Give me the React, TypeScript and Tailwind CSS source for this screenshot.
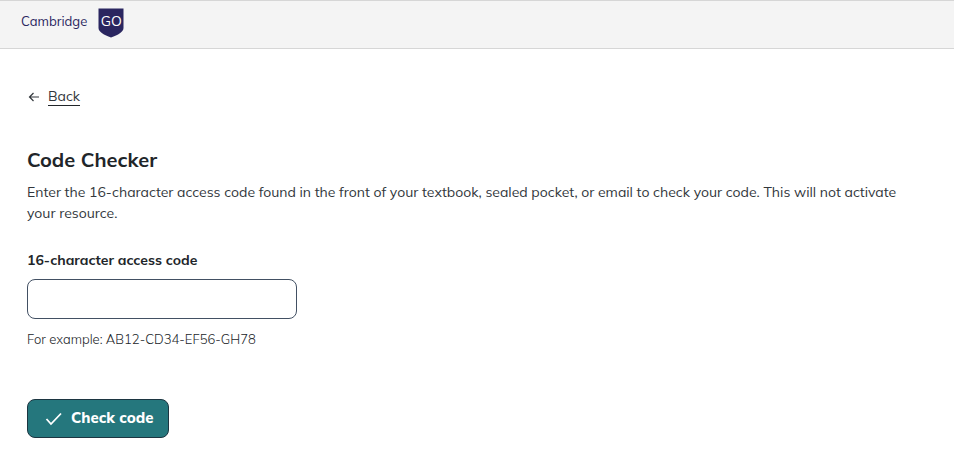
function Header() {
  return (
    <header className="flex h-[49px] border-y border-[#d6d6d6] bg-[#f4f4f4] px-[21px] pt-[7px]">
      <a href="#" className="flex items-start gap-[11px] text-[#2a2660]">
        <span className="pt-1 text-[13px] leading-[18px]">Cambridge</span>
        <span className="relative flex h-[30px] w-[26px] justify-center pt-1 text-[14px] leading-[18px] text-white">
          <svg viewBox="0 0 26 30" className="absolute inset-0 h-full w-full" aria-hidden="true">
            <path d="M0.5 0.500h25v19.5c0 4-5.500 7-12.500 9.500C6 27 0.500 24 0.500 20z" fill="#2a2660" />
          </svg>
          <span className="relative">GO</span>
        </span>
      </a>
    </header>
  );
}

function BackLink() {
  return (
    <a href="#" className="flex w-fit items-center text-[14px] leading-[17px] text-[#32373c]">
      <svg viewBox="0 0 12 12" className="mr-2 ml-px h-3 w-3" fill="none" stroke="currentColor" strokeWidth="1.2" aria-hidden="true">
        <path d="M11 6H2M5.500 2L1.500 6l4 4" />
      </svg>
      <span className="border-b border-[#212529]">Back</span>
    </a>
  );
}

function CodeForm() {
  return (
    <form className="mt-[26px] flex flex-col items-start" onSubmit={(e) => e.preventDefault()}>
      <label htmlFor="access-code" className="text-[14px] leading-[20px] font-bold text-[#212529]">
        16-character access code
      </label>
      <input
        id="access-code"
        type="text"
        aria-describedby="access-code-hint"
        className="mt-[9px] h-10 w-full max-w-[270px] rounded-[8px] border border-[#425063] bg-white px-3 text-[14px]"
      />
      <p id="access-code-hint" className="mt-[10px] text-[13px] leading-[20px] font-light text-[#212529]">
        For example: AB12-CD34-EF56-GH78
      </p>
      <button
        type="submit"
        className="mt-[50px] flex h-[39px] items-center gap-2 rounded-[8px] border border-[#1c3541] bg-[#25777d] pr-[15px] pl-[17px] text-[15px] font-extrabold text-white"
      >
        <svg viewBox="0 0 18 14" className="h-[14px] w-[18px]" fill="none" stroke="currentColor" strokeWidth="1.8" aria-hidden="true">
          <path d="M1.500 7l4.500 5L16 1.500" />
        </svg>
        Check code
      </button>
    </form>
  );
}

export default function App() {
  return (
    <div className="min-h-screen bg-white font-['Mulish','Open_Sans',sans-serif]">
      <Header />
      <main className="px-[27px] pt-[39px] pb-8">
        <BackLink />
        <h1 className="mt-[40px] text-[20px] leading-[28px] font-bold text-[#212529]">Code Checker</h1>
        <p className="mt-2 text-[14px] leading-[21px] text-[#32373c]">
          Enter the 16-character access code found in the front of your textbook, sealed pocket, or email to check your
          code. This will not activate your resource.
        </p>
        <CodeForm />
      </main>
    </div>
  );
}
